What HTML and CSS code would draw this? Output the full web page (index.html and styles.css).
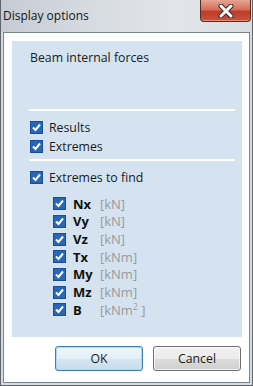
FILE: index.html
```html
<!DOCTYPE html>
<html>
<head>
<meta charset="utf-8">
<link rel="stylesheet" href="styles.css">
</head>
<body>
<div class="window">
  <div class="titlebar">
    <span class="title">Display options</span>
    <div class="close">
      <svg width="20" height="14" viewBox="0 0 20 14">
        <path d="M5 2 L15 12 M15 2 L5 12" stroke="#3a2a2a" stroke-width="5" stroke-linecap="round" fill="none"/>
        <path d="M5 2 L15 12 M15 2 L5 12" stroke="#ffffff" stroke-width="3" stroke-linecap="round" fill="none"/>
      </svg>
    </div>
  </div>
  <div class="client">
    <div class="panel">
      <div class="heading">Beam internal forces</div>
      <div class="sep"></div>
      <div class="rows">
        <div class="row"><svg class="cb" width="13" height="13" viewBox="0 0 13 13"><rect x=".5" y=".5" width="12" height="12" fill="#2866b9" stroke="#1b4d94"/><path d="M3 6.5 L5.5 9 L10 3.5" stroke="#fff" stroke-width="2" fill="none"/></svg><span>Results</span></div>
        <div class="row"><svg class="cb" width="13" height="13" viewBox="0 0 13 13"><rect x=".5" y=".5" width="12" height="12" fill="#2866b9" stroke="#1b4d94"/><path d="M3 6.5 L5.5 9 L10 3.5" stroke="#fff" stroke-width="2" fill="none"/></svg><span>Extremes</span></div>
      </div>
      <div class="sep sep2"></div>
      <div class="row find"><svg class="cb" width="13" height="13" viewBox="0 0 13 13"><rect x=".5" y=".5" width="12" height="12" fill="#2866b9" stroke="#1b4d94"/><path d="M3 6.5 L5.5 9 L10 3.5" stroke="#fff" stroke-width="2" fill="none"/></svg><span>Extremes to find</span></div>
      <div class="grid">
        <svg class="cb" width="13" height="13" viewBox="0 0 13 13"><rect x=".5" y=".5" width="12" height="12" fill="#2866b9" stroke="#1b4d94"/><path d="M3 6.5 L5.5 9 L10 3.5" stroke="#fff" stroke-width="2" fill="none"/></svg><span class="name">Nx</span><span class="unit">[kN]</span>
        <svg class="cb" width="13" height="13" viewBox="0 0 13 13"><rect x=".5" y=".5" width="12" height="12" fill="#2866b9" stroke="#1b4d94"/><path d="M3 6.5 L5.5 9 L10 3.5" stroke="#fff" stroke-width="2" fill="none"/></svg><span class="name">Vy</span><span class="unit">[kN]</span>
        <svg class="cb" width="13" height="13" viewBox="0 0 13 13"><rect x=".5" y=".5" width="12" height="12" fill="#2866b9" stroke="#1b4d94"/><path d="M3 6.5 L5.5 9 L10 3.5" stroke="#fff" stroke-width="2" fill="none"/></svg><span class="name">Vz</span><span class="unit">[kN]</span>
        <svg class="cb" width="13" height="13" viewBox="0 0 13 13"><rect x=".5" y=".5" width="12" height="12" fill="#2866b9" stroke="#1b4d94"/><path d="M3 6.5 L5.5 9 L10 3.5" stroke="#fff" stroke-width="2" fill="none"/></svg><span class="name">Tx</span><span class="unit">[kNm]</span>
        <svg class="cb" width="13" height="13" viewBox="0 0 13 13"><rect x=".5" y=".5" width="12" height="12" fill="#2866b9" stroke="#1b4d94"/><path d="M3 6.5 L5.5 9 L10 3.5" stroke="#fff" stroke-width="2" fill="none"/></svg><span class="name">My</span><span class="unit">[kNm]</span>
        <svg class="cb" width="13" height="13" viewBox="0 0 13 13"><rect x=".5" y=".5" width="12" height="12" fill="#2866b9" stroke="#1b4d94"/><path d="M3 6.5 L5.5 9 L10 3.5" stroke="#fff" stroke-width="2" fill="none"/></svg><span class="name">Mz</span><span class="unit">[kNm]</span>
        <svg class="cb" width="13" height="13" viewBox="0 0 13 13"><rect x=".5" y=".5" width="12" height="12" fill="#2866b9" stroke="#1b4d94"/><path d="M3 6.5 L5.5 9 L10 3.5" stroke="#fff" stroke-width="2" fill="none"/></svg><span class="name">B</span><span class="unit">[kNm<sup>2</sup> ]</span>
      </div>
    </div>
    <div class="buttons">
      <button class="btn default">OK</button>
      <button class="btn">Cancel</button>
    </div>
  </div>
</div>
</body>
</html>
```

FILE: styles.css
```css
html, body {
  margin: 0;
  padding: 0;
}
body {
  width: 253px;
  height: 386px;
  overflow: hidden;
  font-family: "Open Sans", "Noto Sans", sans-serif;
  font-size: 12.3px;
  color: #1a1a1a;
}
.window {
  box-sizing: border-box;
  width: 253px;
  height: 386px;
  display: flex;
  flex-direction: column;
  background: #d7dce1;
  border: 1px solid #5f656c;
  border-top: none;
}
.titlebar {
  height: 32px;
  flex: none;
  display: flex;
  align-items: flex-start;
  background: linear-gradient(to right, #c4cbd3 0%, #d6dbe1 35%, #e2e5e9 70%, #d9dde2 100%);
}
.title {
  margin: 8px 0 0 2px;
  line-height: 16px;
  font-size: 12px;
  color: #151515;
}
.close {
  margin-left: auto;
  margin-right: 1px;
  width: 51px;
  height: 22px;
  box-sizing: border-box;
  border: 1px solid #5a2c24;
  border-top: none;
  border-radius: 0 0 4px 4px;
  background: linear-gradient(#e6a493 0%, #d6705c 45%, #bf3c27 55%, #c9533a 100%);
  display: flex;
  align-items: center;
  justify-content: center;
  box-shadow: inset 0 -1px 0 rgba(255,200,180,0.5);
}
.client {
  flex: 1;
  margin: 0 2px 2px 2px;
  border: 1px solid #7c848c;
  background: #ffffff;
  display: flex;
  flex-direction: column;
  padding: 8px 7px 11px 8px;
}
.panel {
  flex: 1;
  background: #d4e3ef;
  padding: 9px 7px 0 17px;
}
.heading {
  padding-left: 1px;
  line-height: 16px;
}
.sep {
  height: 2px;
  background: #ffffff;
  margin-top: 43px;
}
.sep2 {
  margin-top: 3px;
}
.rows {
  margin-top: 7px;
}
.row {
  height: 19px;
  display: flex;
  align-items: center;
  gap: 6px;
  padding-left: 1px;
}
.find {
  margin-top: 7px;
}
.cb {
  flex: none;
  display: block;
}
.grid {
  margin-top: 8px;
  margin-left: 24px;
  display: grid;
  grid-template-columns: 13px 34px auto;
  grid-auto-rows: 17.67px;
  align-items: center;
  font-size: 13px;
}
.name {
  font-weight: bold;
  padding-left: 7px;
  color: #111;
}
.unit {
  color: #9a9a9a;
}
.unit sup {
  font-size: 8.5px;
  line-height: 0;
  vertical-align: 5px;
}
.buttons {
  flex: none;
  margin-top: 9px;
  margin-right: 1px;
  display: flex;
  justify-content: flex-end;
  gap: 10px;
}
.btn {
  width: 88px;
  height: 25px;
  box-sizing: border-box;
  font-family: "Open Sans", "Noto Sans", sans-serif;
  font-size: 12.3px;
  color: #1a1a1a;
  border: 1px solid #707070;
  border-radius: 3px;
  background: linear-gradient(#f2f2f2 0%, #ebebeb 50%, #dddddd 50%, #cfcfcf 100%);
  box-shadow: inset 0 0 0 1px rgba(255,255,255,0.7);
  padding: 0;
}
.btn.default {
  border-color: #3c7fb1;
  background: linear-gradient(#eef6fb 0%, #e3eff7 50%, #d5e6f2 50%, #c8dcea 100%);
  box-shadow: inset 0 0 0 1px #a8dcf5;
}
```
